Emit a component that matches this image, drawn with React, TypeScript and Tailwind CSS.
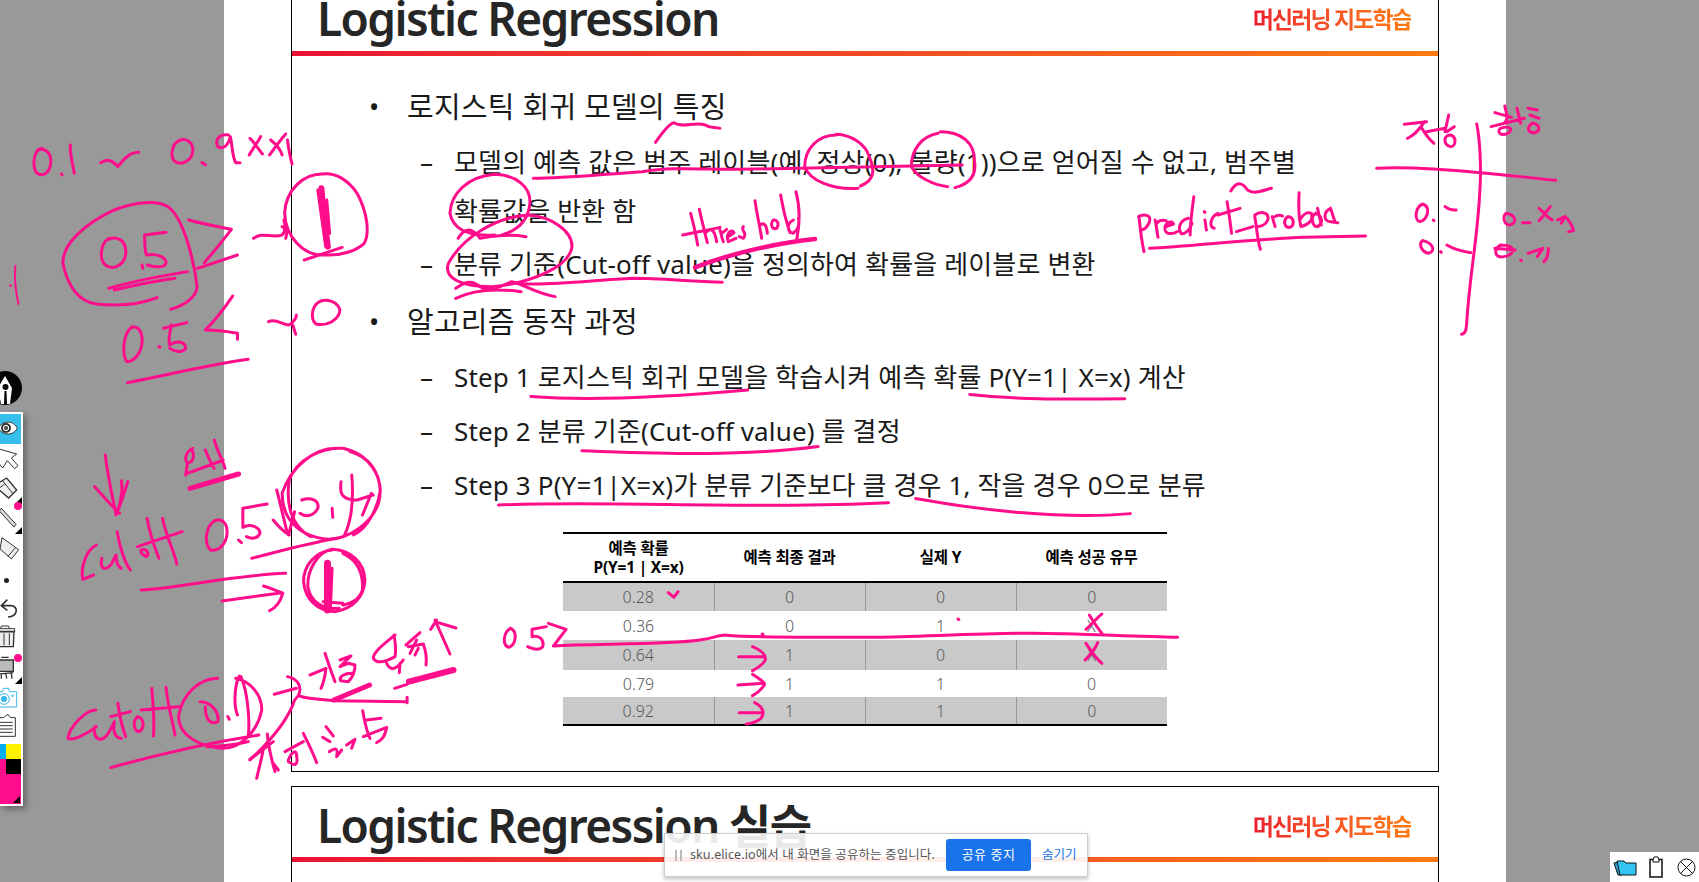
import type { ReactNode } from "react";

const KR = "font-['Noto_Sans','Noto_Sans_CJK_KR',sans-serif]";

const rows = [
  ["0.28", "0", "0", "0"],
  ["0.36", "0", "1", "X"],
  ["0.64", "1", "0", "X"],
  ["0.79", "1", "1", "0"],
  ["0.92", "1", "1", "0"],
];
const rowHeights = ["h-[29px]", "h-[29px]", "h-[30px]", "h-[27px]", "h-[28px]"];

const SlideHeader = ({ title, className }: { title: string; className: string }) => (
  <div className={`flex justify-between items-end pl-[25px] pr-[27px] ${className}`}>
    <div className="text-[46px] leading-[46px] font-semibold tracking-[-1.6px] text-[#262626] whitespace-nowrap">{title}</div>
    <div className="text-[23px] leading-[30px] font-bold tracking-[-1.9px] whitespace-nowrap bg-gradient-to-r from-[#ec1c2e] to-[#ff7a0e] bg-clip-text text-transparent mb-[7px]">
      머신러닝 지도학습
    </div>
  </div>
);

const Bar = () => <div className="h-[5px] bg-gradient-to-r from-[#ec1033] via-[#f04a24] to-[#ff7a0e]" />;

const Level1 = ({ children, className }: { children: ReactNode; className: string }) => (
  <div className={`flex items-center text-[29px] leading-[40px] tracking-[0.25px] text-[#1a1a1a] pl-[77px] ${className}`}>
    <span className="w-[38px] shrink-0 text-[27px]">•</span>
    <span>{children}</span>
  </div>
);

const Level2 = ({ children, className }: { children: ReactNode; className: string }) => (
  <div className={`flex text-[26px] leading-[48.5px] tracking-[0.15px] text-[#1a1a1a] pl-[128px] ${className}`}>
    <span className="w-[34px] shrink-0">–</span>
    <span className="whitespace-nowrap">{children}</span>
  </div>
);

const SlideTable = () => (
  <table className="table-fixed border-collapse w-[604px] ml-[271px] mt-[23px] text-center">
    <thead>
      <tr className="h-[49px] border-y-2 border-y-black text-[15.5px] leading-[19px] font-bold text-black tracking-[-0.2px]">
        <th className="font-bold">
          예측 확률
          <br />
          P(Y=1 | X=x)
        </th>
        <th className="font-bold">예측 최종 결과</th>
        <th className="font-bold">실제 Y</th>
        <th className="font-bold">예측 성공 유무</th>
      </tr>
    </thead>
    <tbody className="border-b-2 border-b-black text-[16px] text-[#595959] font-light">
      {rows.map((row, i) => (
        <tr key={row[0]} className={`${rowHeights[i]} ${i % 2 === 0 ? "bg-[#c9c9c9]" : "bg-white"}`}>
          {row.map((cell, j) => (
            <td key={j} className={i % 2 === 0 && j > 0 ? "border-l border-l-[#999]" : ""}>
              {cell}
            </td>
          ))}
        </tr>
      ))}
    </tbody>
  </table>
);

const Corner = () => (
  <div className="absolute right-[1px] bottom-[1px] w-0 h-0 border-l-[7px] border-l-transparent border-b-[7px] border-b-black" />
);
const PinkDot = ({ className }: { className: string }) => (
  <div className={`absolute w-[8px] h-[8px] rounded-full bg-[#ff0d8b] ${className}`} />
);

const Toolbar = () => (
  <div className="absolute left-0 top-[371px] w-[23px]">
    <svg width="23" height="35" viewBox="0 0 23 35" className="mb-[6px]">
      <circle cx="5" cy="17" r="17" fill="#050505" />
      <path d="M5 5 L12 17 L10 33 L7 33 L6.5 20 L4.5 20 L4 33 L1 33 L-2 17 Z" fill="#fff" />
      <circle cx="5.5" cy="16" r="3" fill="#050505" />
    </svg>
    <div className="bg-white w-[23px] h-[394px] pt-[2px] shadow-[3px_3px_6px_rgba(0,0,0,0.35)] flex flex-col">
      <svg width="21" height="30" viewBox="0 0 63 90" className="bg-[#35bfea] shrink-0">
        <path d="M-6 43 C10 18 40 18 52 43 C40 66 10 66 -6 43 Z" fill="#fff" stroke="#333" strokeWidth="3" />
        <circle cx="18" cy="42" r="15" fill="#333" />
        <circle cx="18" cy="42" r="8" fill="#555" stroke="#fff" strokeWidth="3" />
      </svg>
      <div className="relative h-[30px]">
        <svg width="23" height="30" viewBox="0 0 69 90">
          <path d="M-2 15 L50 30 L34 42 L54 65 L44 74 L22 50 L8 72 L-2 60 Z" fill="#fff" stroke="#333" strokeWidth="3" />
        </svg>
      </div>
      <div className="relative h-[31px]">
        <svg width="23" height="31" viewBox="0 0 69 93">
          <path d="M-2 25 L20 12 L50 48 L26 72 L-2 48 Z" fill="#eee" stroke="#333" strokeWidth="4" />
          <path d="M6 18 L38 58 M-2 42 L14 30" stroke="#333" strokeWidth="3" />
        </svg>
        <Corner />
        <PinkDot className="right-[1px] -bottom-[5px]" />
      </div>
      <div className="relative h-[30px]">
        <svg width="23" height="30" viewBox="0 0 69 90">
          <path d="M-2 18 L4 10 L48 58 L42 66 Z" fill="#ddd" stroke="#333" strokeWidth="3" />
        </svg>
        <Corner />
      </div>
      <div className="h-[30px]">
        <svg width="23" height="30" viewBox="0 0 69 90">
          <path d="M6 8 L56 44 L34 72 L0 42 Z" fill="#eee" stroke="#333" strokeWidth="3" />
          <path d="M24 64 L48 36" stroke="#333" strokeWidth="3" />
        </svg>
      </div>
      <div className="h-[30px] flex items-center pl-[4px]">
        <div className="w-[5px] h-[5px] rounded-full bg-[#222]" />
      </div>
      <div className="h-[29px]">
        <svg width="23" height="29" viewBox="0 0 69 87" fill="none" stroke="#333" strokeWidth="5">
          <path d="M22 14 L4 32 L22 46 M4 32 L34 32 C56 34 54 64 24 66" />
        </svg>
      </div>
      <div className="h-[30px]">
        <svg width="23" height="30" viewBox="0 0 69 90">
          <path d="M-2 22 L42 22 L40 68 L-2 68 Z" fill="#eee" stroke="#333" strokeWidth="4" />
          <path d="M-6 14 L44 14 L44 24 L-6 24 Z M2 14 L4 6 L26 6 L28 14 M12 28 L12 64 M28 28 L28 64" fill="none" stroke="#333" strokeWidth="3" />
        </svg>
      </div>
      <div className="relative h-[31px]">
        <svg width="23" height="31" viewBox="0 0 69 93">
          <path d="M-2 18 L40 18 L40 52 L-2 52 Z" fill="#bbb" stroke="#333" strokeWidth="4" />
          <path d="M4 10 L26 10 M-2 60 L40 56 M4 60 L4 74 M18 60 L20 74 M34 58 L36 74" fill="none" stroke="#333" strokeWidth="4" />
        </svg>
        <Corner />
        <PinkDot className="right-[1px] top-[0px]" />
      </div>
      <div className="h-[28px]">
        <svg width="23" height="28" viewBox="0 0 69 84" fill="none" stroke="#3bb8e8" strokeWidth="3">
          <path d="M-2 20 L8 20 L10 10 L26 10 L28 20 L50 20 L50 66 L-2 66 Z" fill="#fff" />
          <circle cx="12" cy="42" r="16" />
          <circle cx="12" cy="42" r="8" fill="#3bb8e8" />
          <circle cx="38" cy="32" r="3" />
        </svg>
      </div>
      <div className="h-[30px]">
        <svg width="23" height="30" viewBox="0 0 69 90" fill="#fff" stroke="#333" strokeWidth="3">
          <path d="M-2 14 L10 14 L24 4 L32 14 L46 14 L46 70 L-2 70 Z" />
          <path d="M0 28 L38 28 M0 38 L38 38 M0 48 L38 48 M0 58 L38 58" fill="none" />
        </svg>
      </div>
      <div className="relative w-[21px] h-[60px] mt-[1px] bg-[#ff0d8b]">
        <div className="flex">
          <div className="w-[6px] h-[15px] bg-[#00aeef]" />
          <div className="w-[15px] h-[15px] bg-[#fff200]" />
        </div>
        <div className="w-[15px] h-[15px] bg-black ml-[6px]" />
        <Corner />
      </div>
    </div>
  </div>
);

const Ink = () => (
  <svg
    width="1699"
    height="882"
    viewBox="0 0 1699 882"
    className="absolute inset-0 pointer-events-none"
    fill="none"
    stroke="#ff0d8b"
    strokeWidth="3"
    strokeLinecap="round"
    strokeLinejoin="round"
  >
    <style>{`.k *{vector-effect:non-scaling-stroke}`}</style>
    {/* left top block */}
    <g className="k" transform="scale(0.3571 0.3333)">
      <path d="M118 445 C95 450 90 490 100 515 C115 535 140 520 142 490 C145 465 130 440 105 450 M172 522 l2 3 M197 435 C195 465 205 495 208 520" />
      <path d="M282 488 C300 475 315 480 330 500 C345 480 360 458 388 457" />
      <path d="M505 420 C480 430 475 470 490 485 C510 498 540 480 540 450 C540 425 520 415 505 420 M565 488 l10 6" />
      <path d="M640 405 C615 400 600 420 610 440 C625 450 640 435 645 410 C650 430 650 470 660 488 L672 488" />
      <path d="M700 415 C715 430 725 450 735 462 M730 410 C720 430 705 450 698 465 M758 420 C770 430 785 445 790 465 M800 402 C785 420 765 450 755 465 M805 420 C808 445 812 470 818 492" />
      <path d="M440 893 C400 910 340 920 270 912 C220 905 190 860 176 790 C175 730 240 670 320 630 C380 605 440 600 470 620 C510 650 540 760 552 860 C550 890 520 915 478 928" />
      <path d="M305 715 C280 730 278 780 295 795 C320 815 355 790 352 750 C350 720 325 705 300 720 M465 697 L405 705 C405 730 405 750 410 765 C440 760 465 770 465 790 C460 805 430 800 412 795 M398 795 l2 10" />
      <path d="M305 865 C370 845 450 828 525 815 M320 870 C380 855 440 842 490 835" />
      <path d="M528 660 C570 672 610 680 648 688 C625 720 595 760 572 788 M553 805 L665 765" />
      <path d="M710 715 C735 695 760 715 790 705 C800 695 800 680 795 660 M790 680 L805 692 L800 715" />
      <path d="M905 522 C850 520 800 570 797 640 C800 710 850 770 910 765 C960 768 1000 750 1020 730 C1035 700 1030 640 1000 580 C975 540 940 518 905 522" />
      <path d="M900 565 C905 620 912 690 918 740" strokeWidth="6" />
      <path d="M890 570 L912 740 M915 600 l8 100 M852 780 L958 742" />
      <path d="M895 905 C870 920 870 960 885 972 C915 980 950 960 952 930 C945 905 915 895 895 905" />
      <path d="M752 965 C775 955 790 975 810 975 C820 965 830 960 830 945 M820 975 L828 1003" />
      <path d="M370 980 C345 1000 340 1060 355 1085 C380 1085 400 1050 398 1015 C395 985 380 975 365 985 M445 1040 l3 2 M523 968 L458 985 M480 975 C475 1000 470 1020 475 1035 C495 1020 520 1025 520 1045 C510 1060 490 1055 475 1045" />
      <path d="M652 888 C625 930 600 965 575 990 C605 990 640 995 665 1000 L665 1018" />
      <path d="M357 1148 C470 1125 580 1095 695 1078" />
      <path d="M43 798 C40 830 45 880 52 912 M28 856 l3 2" strokeWidth="2" />
    </g>
    {/* left bottom block */}
    <g className="k" transform="translate(0 440) scale(0.3571 0.3333)">
      <path d="M295 45 C300 100 315 170 325 225 C340 190 350 150 358 125 M265 140 C290 170 315 200 335 220 M340 122 C345 160 335 200 325 220" />
      <path d="M540 25 C520 35 515 60 525 68 C545 68 545 40 535 28 M575 30 C585 55 590 70 600 85 M600 0 C610 40 625 60 630 85 M525 100 C550 90 590 75 625 60 M525 70 L520 105" />
      <path d="M532 145 L668 102" strokeWidth="5" />
      <path d="M270 315 C240 330 225 385 232 418 L262 405 M285 355 C280 385 290 395 310 375 C315 370 320 350 325 345 C325 370 330 380 340 385 M328 275 C335 320 350 370 365 390 M395 330 C410 325 420 340 410 350 C400 345 392 340 395 330 M412 235 C420 290 440 340 445 355 M455 235 C465 290 490 340 495 372 M385 320 L510 275" />
      <path d="M605 240 C575 255 570 310 590 330 C620 335 640 300 635 265 C632 245 620 235 600 243 M668 300 l8 8 M748 192 L680 205 C680 230 680 250 680 262 C700 250 728 260 728 280 C720 300 700 295 690 290" />
      <path d="M775 150 C785 190 795 240 805 280 M765 240 C780 260 795 275 810 285 M825 215 C820 240 812 265 808 285" />
      <path d="M940 25 C880 25 815 80 790 160 C790 230 830 290 920 298 C980 295 1040 250 1060 190 C1080 110 1030 40 960 25 C900 20 830 60 810 120 C800 190 815 260 870 290 M990 285 C1030 265 1060 200 1065 150 C1060 90 1030 50 980 35" />
      <path d="M845 180 C870 170 895 180 890 205 C880 225 860 235 840 220 M930 205 L932 232 M955 125 C950 165 960 180 1000 180 L1045 165 M985 105 C990 170 985 240 965 285 M1040 160 L1015 225" />
      <path d="M705 355 C780 335 860 310 945 295 M395 450 C500 445 650 405 800 400 M622 483 L790 458 M738 438 C760 445 780 455 792 460 C785 485 770 505 755 512" />
      <path d="M930 330 C880 335 850 380 850 425 C855 480 890 515 940 515 C990 505 1020 470 1022 420 C1020 370 985 330 930 328 C890 335 860 390 862 440 C870 490 910 510 950 505 M960 340 C1000 360 1018 400 1015 450 C1005 480 985 490 960 495" />
      <path d="M917 370 L917 510" strokeWidth="7" />
      <path d="M930 385 L925 510 M905 485 L960 490" />
      <path d="M268 810 C240 810 195 860 190 895 C205 905 245 880 270 860 M265 860 C260 895 280 910 300 885 C310 870 315 855 320 845 C315 880 325 895 340 895 M330 790 C335 830 345 870 352 890 M310 830 L365 815 M385 830 C370 845 375 875 390 875 C405 865 405 835 385 830 M425 745 C430 800 432 850 430 888 M465 742 C470 800 485 850 490 885 M395 810 L500 800" />
      <path d="M610 715 C560 715 510 760 500 830 C500 880 550 920 625 925 C670 925 720 880 733 810 C733 760 700 725 660 715 M560 785 C590 785 615 815 610 845 C590 855 575 840 575 800 M638 830 L642 838 M670 708 C655 740 655 800 665 825 M675 710 C695 760 700 850 695 890" />
      <path d="M310 983 C420 950 570 910 725 885 M580 920 C620 920 680 910 695 905" />
      <path d="M768 763 L830 745 M805 710 C830 715 845 735 838 760 C835 770 830 775 825 780 C810 830 770 890 700 960 M838 768 C870 778 900 778 935 782 L1140 785 M1140 772 L1140 788" />
      <path d="M935 780 L1035 735" strokeWidth="5" />
      <path d="M1105 745 L1140 733" />
      <path d="M1145 725 L1270 690" strokeWidth="6" />
      <path d="M1430 565 C1410 575 1405 615 1425 622 C1445 615 1450 575 1430 565 M1478 620 l3 2 M1530 560 L1490 568 L1490 590 C1505 585 1525 595 1520 620 C1510 632 1495 628 1482 622" />
    </g>
    {/* handwriting under the cut-off arrow */}
    <g className="k" transform="translate(220 620) scale(0.3333)">
      <path d="M270 165 L318 145 C315 170 310 190 303 205 M315 100 C325 130 335 160 345 185 M360 120 L393 108 C375 125 365 135 360 140 L385 130 L405 135 C405 160 395 175 385 185 L362 182 C355 170 375 160 395 160" />
      <path d="M525 45 C495 70 460 95 460 115 C470 130 490 130 525 110 C530 85 525 65 522 45 M500 130 C510 150 525 155 550 120 M540 130 L538 158 M558 75 L600 38 M565 80 L610 72 C620 100 620 120 618 135 M590 60 L570 100 M595 85 L585 105" />
      <path d="M645 0 L690 102 M632 28 L650 0 M655 8 L708 24" />
      <path d="M90 418 L160 365 M142 342 C145 380 155 420 165 455 M130 385 C125 420 115 450 110 475 M160 430 L175 450 M205 420 C215 395 230 385 230 410 C235 435 225 440 205 425 M250 340 C265 370 280 400 290 428 M195 395 L250 365" />
      <path d="M318 320 L340 348 M308 352 L330 365 M328 395 C345 385 355 380 350 410 L365 390 M380 375 L405 358 L395 385 M428 272 C435 310 445 345 450 355 M440 300 L483 295 M430 350 L500 322 C495 345 490 360 470 368" />
    </g>
    {/* table marks */}
    <g className="k" transform="translate(540 520) scale(0.4209 0.3333)">
      <path d="M305 218 L318 232 L328 215 M993 297 l2 2 M528 342 l2 2" />
      <path d="M1297 328 C1315 310 1325 290 1335 282 M1305 285 C1315 305 1325 325 1335 340 M1295 420 C1310 400 1320 385 1325 368 M1297 370 C1310 395 1325 420 1335 430" />
      <path d="M20 310 L62 328 L32 378 C120 370 300 375 380 360 C410 355 425 345 440 345 C460 352 600 352 800 352 C900 350 1050 340 1150 340 C1250 338 1400 350 1515 352" />
      <path d="M472 410 L535 410 M505 380 C525 390 538 405 535 420 C530 435 515 445 505 452 M470 495 L533 490 M505 463 C520 475 533 485 533 495 C525 510 515 520 505 527 M473 578 L530 578 M510 548 C530 560 535 580 525 595 C515 605 505 610 490 612" />
    </g>
    {/* right side */}
    <g className="k" transform="translate(1120 0) scale(0.3693 0.3333)">
      <path d="M770 373 L830 365 M825 365 C810 390 790 410 778 415 M815 380 C825 400 840 420 850 430 M830 395 L880 385 M890 345 L880 395 M905 380 L885 395 M895 405 C875 405 875 435 895 440 C910 440 912 410 895 405" />
      <path d="M1042 318 C1045 340 1055 355 1040 370 M1075 325 L1085 370 M1015 338 L1060 352 M1005 380 L1095 355 M1030 385 C1020 395 1030 410 1050 400 C1065 390 1060 375 1030 385 M1105 325 L1130 330 M1110 345 L1135 355 M1115 370 C1100 385 1105 400 1125 398 C1140 390 1135 370 1115 370" />
      <path d="M966 372 C975 420 978 500 975 560 C970 700 950 800 940 950 C938 985 938 1000 925 1003 M695 505 C780 498 900 510 975 518 C1050 525 1120 535 1180 541" />
      <path d="M300 573 C315 545 330 545 345 570 C365 585 390 570 410 565" />
      <path d="M52 655 C55 690 60 730 65 755 M50 650 C65 640 85 645 80 665 C75 680 65 690 55 690 M95 660 C100 680 100 700 103 712 M100 670 C105 660 115 660 125 662 M125 680 L145 672 C140 660 120 665 122 690 C125 705 145 702 155 695 M185 655 C165 660 155 680 165 700 C175 705 190 690 195 670 M200 590 C195 630 190 670 190 705 M230 660 C232 670 232 680 234 690 M228 635 l2 2 M265 640 C245 650 240 680 255 685 M290 605 C295 640 300 680 302 700 M265 645 L325 625 M315 695 L360 680" />
      <path d="M365 650 C370 680 372 720 380 748 M365 645 C385 630 405 640 400 660 C395 675 380 680 370 680 M412 650 L420 680 M420 650 C425 645 435 645 440 648 M455 650 C440 660 445 685 460 682 C475 675 470 650 455 650 M485 578 C483 620 485 660 490 680 C510 675 525 660 518 640 C505 635 495 645 490 655 M530 640 C515 650 520 680 535 680 C550 670 550 650 530 640 M535 625 L545 675 M570 625 C550 635 550 665 570 665 L590 668 M570 625 L582 665" />
      <path d="M80 745 C200 738 350 718 500 712 L665 708" />
      <path d="M820 612 C800 620 795 660 812 665 C830 660 845 625 820 612 M848 660 l2 2 M880 620 C890 628 898 632 910 630 M820 722 C808 730 815 755 835 760 C855 755 850 730 820 722 M868 755 l2 2 M885 735 C900 745 930 755 950 758" />
      <path d="M1045 640 C1035 650 1040 675 1055 675 C1075 670 1075 645 1045 640 M1090 668 L1110 668 M1135 625 C1145 635 1155 650 1170 660 M1165 620 C1155 635 1145 650 1135 662 M1185 660 L1205 650 C1215 660 1225 680 1228 692 L1215 695 M1205 650 L1195 670" />
      <path d="M1030 735 C1010 750 1015 775 1040 770 C1070 765 1075 735 1030 735 M1015 745 L1070 750 M1085 780 l2 2 M1105 760 L1145 745 L1130 770 M1160 745 C1160 760 1158 775 1148 785" />
    </g>
    {/* text marks */}
    <g className="k" transform="translate(400 80) scale(0.4847 0.3333)">
      <path d="M527 187 C540 160 555 130 565 128 C580 145 610 125 630 135 C640 145 650 140 660 145" />
      <path d="M275 295 C340 295 400 285 500 275 C560 260 620 268 700 268 C800 266 950 262 1160 255" />
      <path d="M900 165 C860 165 835 210 835 260 C845 300 890 330 945 325 M900 163 C930 165 960 190 968 230 C980 270 980 300 950 318" />
      <path d="M1110 160 C1075 170 1055 210 1055 260 C1065 290 1100 315 1130 320 M1115 155 C1160 155 1185 190 1185 240 C1190 280 1180 310 1145 323" />
      <path d="M195 283 C140 290 105 340 103 400 C110 450 140 470 195 465 M195 283 C240 285 270 320 268 370 C265 420 245 450 210 465" />
      <path d="M120 475 C130 450 145 435 165 475 C185 470 220 460 260 470" />
      <path d="M265 405 C200 410 130 470 100 550 C90 590 120 620 190 620 C270 610 350 560 355 500 C355 450 310 410 265 405" />
      <path d="M115 625 C130 610 145 595 165 620 C180 635 200 625 230 605 C250 610 280 640 320 650 M115 655 C150 630 200 625 250 635" />
      <path d="M240 610 C300 620 400 600 480 595 C540 595 600 605 665 607" />
    </g>
    {/* threshold note */}
    <g className="k" transform="translate(660 180) scale(0.3333)">
      <path d="M92 100 C100 130 108 165 113 195 M68 165 C110 155 150 150 180 142 M118 88 C125 120 135 160 142 188 M140 155 C155 140 165 155 170 185 M180 150 C185 165 185 175 190 185 M185 160 L200 148 M205 170 L222 158 C215 145 195 160 205 185 L228 175 M250 140 C240 150 265 160 250 175 L238 170 M285 62 C290 100 300 140 305 175 M300 135 C315 125 320 140 322 160 M340 120 C330 130 335 150 350 145 C360 130 350 118 340 120 M362 45 C370 90 380 130 390 158 M400 120 C380 130 380 155 400 160 C415 150 420 130 415 115 M408 35 C420 80 420 130 410 180" />
      <path d="M105 262 C200 225 340 190 465 177" strokeWidth="4.5" />
    </g>
    {/* underlines, shrunk view coordinates */}
    <g className="k" transform="scale(1.0836)">
      <path d="M490 366 C540 370 600 368 690 360 M895 364 C950 370 1000 368 1038 368" />
      <path d="M537 416 C600 418 680 422 755 412" />
      <path d="M460 466 C560 462 700 470 820 464 M845 460 C900 470 980 480 1043 474" />
    </g>
  </svg>
);

const ShareBar = () => (
  <div className="absolute left-[664px] top-[833px] w-[424px] h-[44px] bg-white/90 border border-[#ccc] shadow-[0_2px_4px_rgba(0,0,0,0.25)] flex items-center pl-[10px]">
    <div className="flex gap-[3px] mr-[8px]">
      <div className="w-[2px] h-[11px] bg-[#bbb]" />
      <div className="w-[2px] h-[11px] bg-[#bbb]" />
    </div>
    <span className="text-[12.5px] text-[#555] whitespace-nowrap w-[256px] tracking-[0.1px]">sku.elice.io에서 내 화면을 공유하는 중입니다.</span>
    <button className="w-[85px] h-[32px] rounded-[3px] bg-[#1a73e8] text-white text-[13px] tracking-[0.5px]">공유 중지</button>
    <span className="ml-[11px] text-[12.5px] text-[#1a73e8] whitespace-nowrap">숨기기</span>
  </div>
);

const Tray = () => (
  <div className="absolute right-0 bottom-0 w-[89px] h-[30px] bg-white flex items-center pl-[3px] gap-[10px]">
    <svg width="24" height="20" viewBox="0 0 24 20">
      <path d="M1 6 L6 5 L9 18 L5 18 Z" fill="#2aa5d0" stroke="#111" />
      <path d="M4 4 L11 4 L13 6 L23 6 L23 18 L7 18 Z" fill="#35c5f3" stroke="#111" />
    </svg>
    <svg width="18" height="22" viewBox="0 0 18 22" fill="none" stroke="#111">
      <path d="M3 3.5 H15 V21 H3 Z" strokeWidth="1.5" />
      <path d="M6 4 L7 1 H11 L12 4 V6 H6 Z" fill="#fff" />
    </svg>
    <svg width="19" height="19" viewBox="0 0 19 19" fill="none" stroke="#111" className="ml-[2px]">
      <circle cx="9.5" cy="9.5" r="8.5" />
      <path d="M3.5 3.5 L15.5 15.5 M15.5 3.5 L3.5 15.5" />
    </svg>
  </div>
);

export default function App() {
  return (
    <div className={`relative w-[1699px] h-[882px] overflow-hidden bg-[#999] flex ${KR}`}>
      <div className="w-[224px] shrink-0" />
      <div className="w-[1282px] shrink-0 h-full bg-white px-[67px]">
        <div className="h-[772px] border-x border-b border-black">
          <SlideHeader title="Logistic Regression" className="h-[51px] pb-[10px]" />
          <Bar />
          <Level1 className="mt-[31px]">로지스틱 회귀 모델의 특징</Level1>
          <Level2 className="mt-[11px]">
            모델의 예측 값은 범주 레이블(예, 정상(0), 불량(1))으로 얻어질 수 없고, 범주별
            <br />
            확률값을 반환 함
          </Level2>
          <Level2 className="mt-[5px]">분류 기준(Cut-off value)을 정의하여 확률을 레이블로 변환</Level2>
          <Level1 className="mt-[13px]">알고리즘 동작 과정</Level1>
          <Level2 className="mt-[11px]">Step 1 로지스틱 회귀 모델을 학습시켜 예측 확률 P(Y=1| X=x) 계산</Level2>
          <Level2 className="mt-[6px]">Step 2 분류 기준(Cut-off value) 를 결정</Level2>
          <Level2 className="mt-[5px]">Step 3 P(Y=1|X=x)가 분류 기준보다 클 경우 1, 작을 경우 0으로 분류</Level2>
          <SlideTable />
        </div>
        <div className="mt-[14px] h-[200px] border-x border-t border-black">
          <SlideHeader title="Logistic Regression 실습" className="h-[70px] pb-[9px]" />
          <Bar />
        </div>
      </div>
      <div className="flex-1" />
      <Ink />
      <Toolbar />
      <ShareBar />
      <Tray />
    </div>
  );
}
